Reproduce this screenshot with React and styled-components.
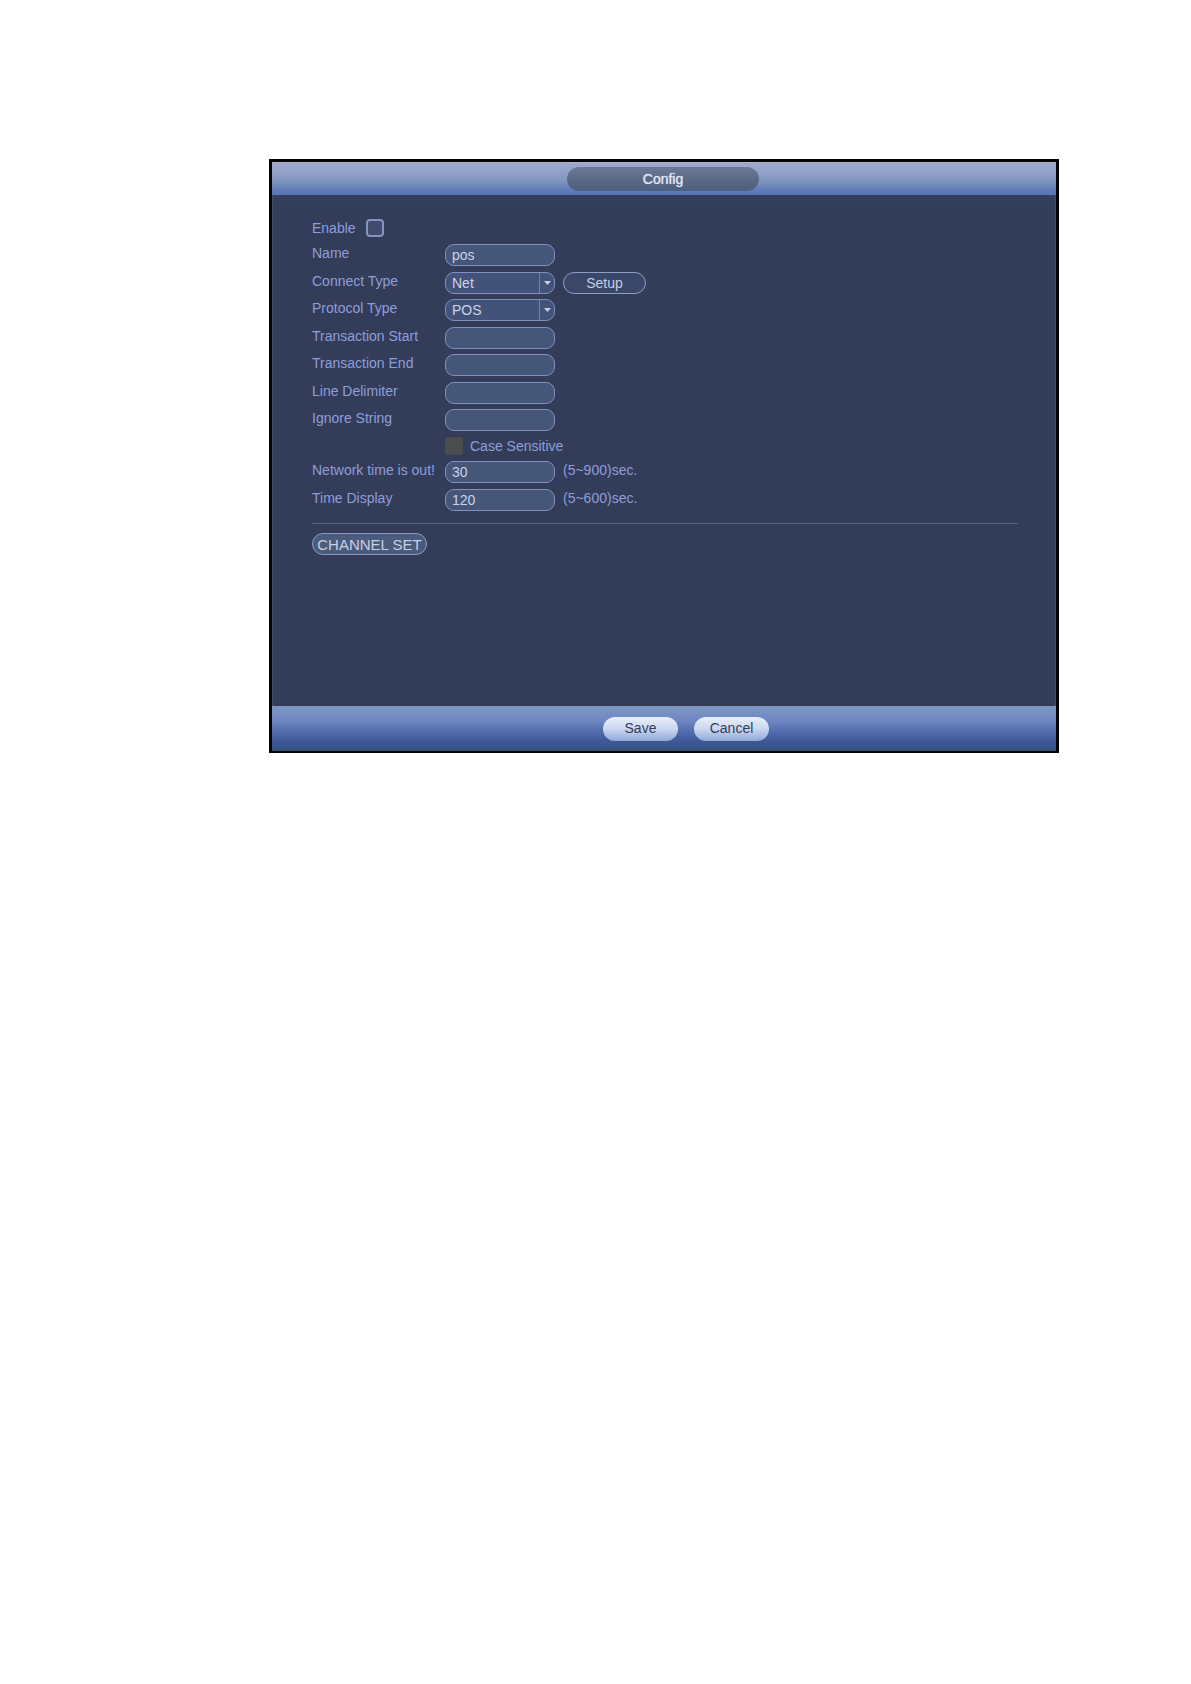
import React, { useState } from 'react';
import styled, { createGlobalStyle } from 'styled-components';

const GlobalStyle = createGlobalStyle`
    *, *::before, *::after {
        box-sizing: border-box;
    }
    body {
        margin: 0;
        background: #fff;
    }
    body, input, select, button {
        font-family: "Liberation Sans", Arial, sans-serif;
        font-size: 14px;
    }
`;

const Page = styled.main`
    padding: 159px 132px 40px 269px;
`;

const Dialog = styled.form`
    display: flex;
    flex-direction: column;
    border: solid #03050b;
    border-width: 3px 3px 2px;
    background: #333c59;
    color: #8f9edb;
`;

const Header = styled.header`
    display: flex;
    justify-content: center;
    padding: 4px 2px 4px 0;
    border-top: 1px solid #b0b2bd;
    background: linear-gradient(#a0a8cc, #8f9fc9 35%, #7f97bb 55%, #6480bb 80%, #5b72b4);
`;

const Title = styled.h1`
    width: 192px;
    margin: 0;
    border-radius: 12px;
    background: linear-gradient(#6f7a97, #5a6984 50%, #4d5f80);
    color: #dfe5f2;
    font-size: 14px;
    font-weight: 400;
    line-height: 24px;
    text-align: center;
    text-shadow: 0 0 1px #dfe5f2;
`;

const Body = styled.div`
    min-height: 511px;
    padding: 24px 37px 24px 39px;
    border: solid #46506b;
    border-width: 0 1px;
    background: linear-gradient(#33415b, #333c59 16px);
`;

const EnableRow = styled.div`
    display: flex;
    align-items: center;
    gap: 10px;
    height: 18px;
    margin-bottom: 7px;
`;

const Fields = styled.div`
    display: flex;
    flex-direction: column;
    justify-content: space-between;
    height: ${props => props.$height};
`;

const Row = styled.div`
    display: grid;
    grid-template-columns: 125px 110px auto;
    justify-content: start;
    align-items: center;
    column-gap: 8px;
    height: 22px;
`;

const Label = styled.label`
    line-height: 18px;
    padding-bottom: ${props => (props.$raised ? '4px' : '0')};
    white-space: nowrap;
`;

const Hint = styled.span`
    line-height: 18px;
    padding-bottom: 4px;
`;

const Input = styled.input`
    width: 100%;
    height: 22px;
    padding: 0 6px;
    border: 1px solid #8090c0;
    border-radius: 9px;
    outline: none;
    background: #455678;
    color: #cbd4ea;
`;

const SelectBox = styled.div`
    position: relative;
`;

const Select = styled.select`
    display: block;
    appearance: none;
    width: 100%;
    height: 22px;
    padding: 0 20px 0 6px;
    border: 1px solid #8090c0;
    border-radius: 9px;
    outline: none;
    background: #435279;
    color: #cbd4ea;
`;

const Arrow = styled.span`
    position: absolute;
    top: 1px;
    right: 1px;
    bottom: 1px;
    display: flex;
    align-items: center;
    width: 15px;
    padding-left: 4px;
    border-left: 1px solid #7182ac;
    pointer-events: none;
`;

const Checkbox = styled.input.attrs({ type: 'checkbox' })`
    appearance: none;
    width: 18px;
    height: 18px;
    margin: 0;
    border: 2px solid #8394c2;
    border-radius: 4px;
    background: #414b6c;

    &:checked {
        background: #8394c2;
    }
    &:disabled {
        border: 1px solid #464a50;
        border-radius: 2px;
        background: #4c4e4e;
    }
`;

const CaseRow = styled.div`
    display: flex;
    align-items: center;
    gap: 7px;
    margin: 6px 0;
    padding-left: 133px;
`;

const Divider = styled.hr`
    height: 1px;
    margin: 12px 0 9px;
    border: 0;
    background: #53618a;
`;

const OutlineButton = styled.button`
    width: ${props => props.$width};
    height: 22px;
    padding: 0;
    border: 1px solid #8c9cc4;
    border-radius: 11px;
    background: ${props => (props.$filled ? '#4b5b7b' : '#3a4769')};
    color: #c5cfe6;
    font-size: ${props => (props.$filled ? '15px' : '14px')};
    white-space: nowrap;
`;

const Footer = styled.footer`
    display: flex;
    justify-content: center;
    gap: 16px;
    padding: 10px 0 10px 44px;
    border-top: 1px solid #8193bd;
    background: linear-gradient(#7e96c4, #6f87c2 30%, #536dae 55%, #3f5a9a 75%, #37548a 92%, #3b4c72);
`;

const PillButton = styled.button`
    width: 75px;
    height: 24px;
    padding: 0 0 2px;
    border: 0;
    border-radius: 12px;
    background: linear-gradient(#eaf0fb, #c9d6ee 50%, #91a9d8);
    color: #343b5c;
`;

const transactionFields = [
    { key: 'start', label: 'Transaction Start' },
    { key: 'end', label: 'Transaction End' },
    { key: 'delimiter', label: 'Line Delimiter' },
    { key: 'ignore', label: 'Ignore String' },
];

const Dropdown = ({ id, value, options, onChange }) => (
    <SelectBox>
        <Select id={id} value={value} onChange={onChange}>
            {options.map(o => <option key={o}>{o}</option>)}
        </Select>
        <Arrow>
            <svg width="7" height="4" viewBox="0 0 7 4" aria-hidden="true">
                <path d="M0 0h7L3.5 4z" fill="#c5cfe6" />
            </svg>
        </Arrow>
    </SelectBox>
);

export default () => {
    const [enabled, setEnabled] = useState(false);
    const [values, setValues] = useState({
        name: 'pos',
        connect: 'Net',
        protocol: 'POS',
        start: '',
        end: '',
        delimiter: '',
        ignore: '',
        timeout: '30',
        display: '120',
    });

    const onChange = key => e => setValues({ ...values, [key]: e.target.value });

    const onSave = e => {
        e.preventDefault();
    }

    return (
        <Page>
            <GlobalStyle />
            <Dialog onSubmit={onSave}>
                <Header>
                    <Title>Config</Title>
                </Header>
                <Body>
                    <EnableRow>
                        <Label htmlFor="enable">Enable</Label>
                        <Checkbox id="enable" checked={enabled} onChange={e => setEnabled(e.target.checked)} />
                    </EnableRow>
                    <Fields $height="187px">
                        <Row>
                            <Label $raised htmlFor="name">Name</Label>
                            <Input id="name" value={values.name} onChange={onChange('name')} />
                        </Row>
                        <Row>
                            <Label $raised htmlFor="connect">Connect Type</Label>
                            <Dropdown id="connect" value={values.connect} options={['Net', 'COM']} onChange={onChange('connect')} />
                            <OutlineButton type="button" $width="83px">Setup</OutlineButton>
                        </Row>
                        <Row>
                            <Label $raised htmlFor="protocol">Protocol Type</Label>
                            <Dropdown id="protocol" value={values.protocol} options={['POS']} onChange={onChange('protocol')} />
                        </Row>
                        {transactionFields.map(f => (
                            <Row key={f.key}>
                                <Label $raised htmlFor={f.key}>{f.label}</Label>
                                <Input id={f.key} value={values[f.key]} onChange={onChange(f.key)} />
                            </Row>
                        ))}
                    </Fields>
                    <CaseRow>
                        <Checkbox id="case" disabled />
                        <Label htmlFor="case">Case Sensitive</Label>
                    </CaseRow>
                    <Fields $height="50px">
                        <Row>
                            <Label $raised htmlFor="timeout">Network time is out!</Label>
                            <Input id="timeout" value={values.timeout} onChange={onChange('timeout')} />
                            <Hint>(5~900)sec.</Hint>
                        </Row>
                        <Row>
                            <Label $raised htmlFor="display">Time Display</Label>
                            <Input id="display" value={values.display} onChange={onChange('display')} />
                            <Hint>(5~600)sec.</Hint>
                        </Row>
                    </Fields>
                    <Divider />
                    <OutlineButton type="button" $width="115px" $filled>CHANNEL SET</OutlineButton>
                </Body>
                <Footer>
                    <PillButton type="submit">Save</PillButton>
                    <PillButton type="button">Cancel</PillButton>
                </Footer>
            </Dialog>
        </Page>
    )
}
